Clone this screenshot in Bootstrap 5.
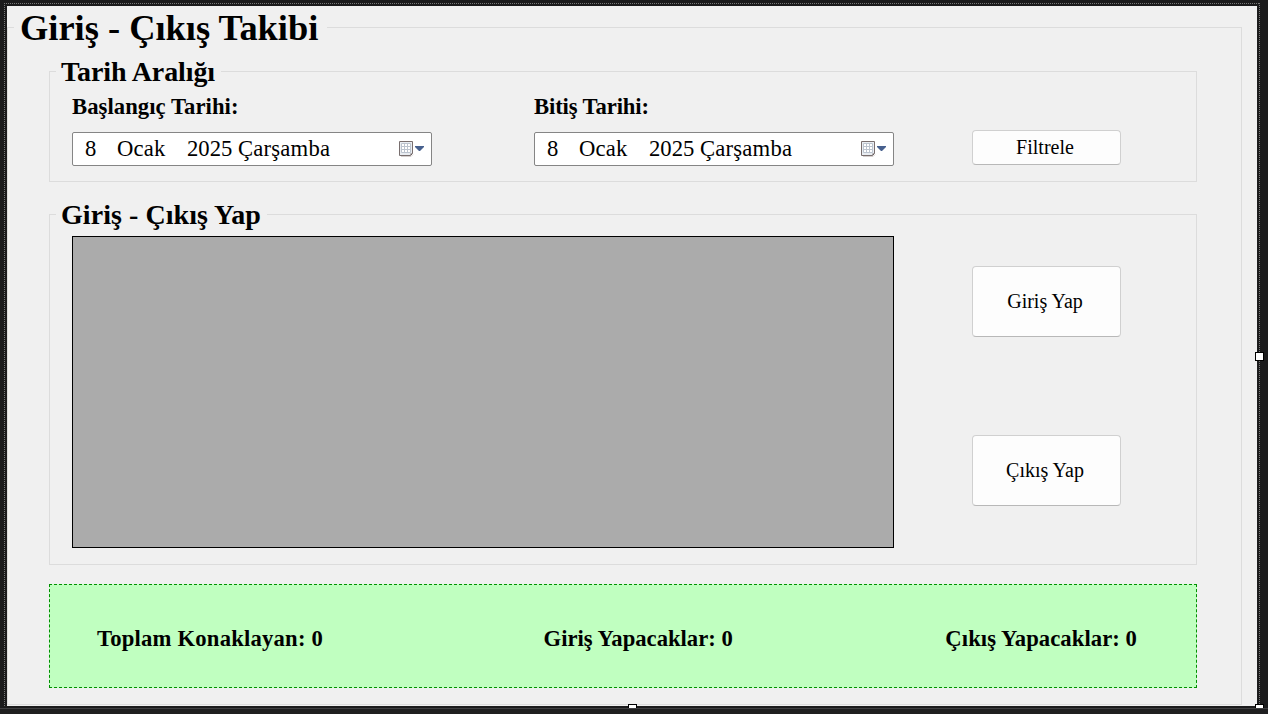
<!DOCTYPE html>
<html lang="tr">
<head>
<meta charset="utf-8">
<title>Giriş - Çıkış Takibi</title>
<link href="https://cdn.jsdelivr.net/npm/bootstrap@5.3.0/dist/css/bootstrap.min.css" rel="stylesheet">
<style>
body{background:#1b1b1c;font-family:"Liberation Serif",serif;color:#000;width:1268px;height:714px}
.designer{width:1268px;height:714px;padding:6px 0 0 7px}
.dots-h{left:4px;top:3px;width:1256px;height:1px;background:repeating-linear-gradient(90deg,#777 0 1px,transparent 1px 2px)}
.dots-v{top:3px;width:1px;height:704px;background:repeating-linear-gradient(#777 0 1px,transparent 1px 2px)}
.dots-l{left:4px}.dots-r{left:1259px}
.grip{width:9px;height:9px;background:#fff;border:1px solid #000}
.grip-r{left:1255px;top:352px}.grip-b{left:628px;top:704px}.grip-c{left:1255px;top:704px}
.status-edge{top:708px;height:6px;background:#1f1f20;border-top:1px solid #3f3f41}
.win-form{width:1250px;height:700px;background:#f0f0f0;padding-top:21px}
.group-frame{border:1px solid #dcdcdc;font-weight:bold}
.group-main{width:1235px;height:678px;padding:0 44px 0 41px}
.group-title{width:max-content;background:#f0f0f0;white-space:pre}
.title-main{margin:-22px 0 0 -35px;width:313px;padding:1px 0 0 6px;font-size:36.4px;line-height:43px}
.title-sub{margin:-16px 0 -1px 6px;padding:0 6px 0 5px;font-size:28px;line-height:32px}
.t1{letter-spacing:-.1px}
.t2{letter-spacing:.06px}
.t3{letter-spacing:-.12px}
.t4{letter-spacing:.06px}
.t5{letter-spacing:.2px}
.t7{letter-spacing:.06px}
.group-dates{height:111px;margin-top:21px}
.group-actions{height:351px;margin-top:32px}
.inner-grid{display:grid;padding-left:22px}
.dates-grid{grid-template-columns:360px 360px 149px;column-gap:102px}
.dates-grid .filter-cell{margin-left:-24px;padding-top:43px}
.field-label{display:block;font-size:22.67px;line-height:30px;margin-top:5px;white-space:pre}
.date-box{height:34px;margin-top:10px;background:#fff;border:1px solid #858585;border-radius:2px;padding:0 6px 0 12px;font-size:22.67px;font-weight:normal;line-height:30px;white-space:pre}
.date-box>span{letter-spacing:.2px}
.d-day{width:32px}.d-month{width:70px}.d-year{width:51px;letter-spacing:0!important}
.win-btn{width:149px;background:#fdfdfd;border:1px solid #d0d0d0;border-bottom-color:#b8b8b8;border-radius:4px;color:#000;font-size:20px;padding:0 3px 1px 0;line-height:29px}
.btn-short{height:35px}.btn-tall{height:71px}
.actions-grid{grid-template-columns:822px 149px;column-gap:78px;margin-top:6px}
.data-area{height:312px;background:#ababab;border:1px solid #000}
.stack-btns{padding-top:30px;gap:98px}
.totals{height:104px;margin-top:19px;background:#c0ffc0;border:1px dashed #009000;font-size:22.67px;font-weight:bold;white-space:pre;padding:6px 59px 0 47px}
.t6{margin-left:8px}
</style>
</head>
<body>
<div class="designer position-relative overflow-hidden">
  <main class="win-form">
    <section class="group-frame group-main">
      <div class="group-title title-main">Giriş - Çıkış Takibi</div>
      <section class="group-frame group-dates">
        <div class="group-title title-sub"><span class="t1">Tarih Aralığı</span></div>
        <div class="inner-grid dates-grid">
          <div>
            <span class="field-label"><span class="t2">Başlangıç Tarihi:</span></span>
            <div class="date-box d-flex align-items-center"><span class="d-day">8</span><span class="d-month">Ocak</span><span class="d-year">2025</span><span>Çarşamba</span>
              <svg class="ms-auto" width="26" height="16" viewBox="0 0 26 16"><use href="#cal"/></svg></div>
          </div>
          <div>
            <span class="field-label"><span class="t3">Bitiş Tarihi:</span></span>
            <div class="date-box d-flex align-items-center"><span class="d-day">8</span><span class="d-month">Ocak</span><span class="d-year">2025</span><span>Çarşamba</span>
              <svg class="ms-auto" width="26" height="16" viewBox="0 0 26 16"><use href="#cal"/></svg></div>
          </div>
          <div class="filter-cell"><button class="btn win-btn btn-short d-block">Filtrele</button></div>
        </div>
      </section>
      <section class="group-frame group-actions">
        <div class="group-title title-sub"><span class="t4">Giriş - Çıkış Yap</span></div>
        <div class="inner-grid actions-grid">
          <div class="data-area"></div>
          <div class="stack-btns d-flex flex-column">
            <button class="btn win-btn btn-tall">Giriş Yap</button>
            <button class="btn win-btn btn-tall">Çıkış Yap</button>
          </div>
        </div>
      </section>
      <section class="totals d-flex justify-content-between align-items-center"><span class="t5">Toplam Konaklayan: 0</span><span class="t6">Giriş Yapacaklar: 0</span><span class="t7">Çıkış Yapacaklar: 0</span></section>
    </section>
  </main>
  <div class="dots-h position-absolute"></div>
  <div class="dots-v dots-l position-absolute"></div>
  <div class="dots-v dots-r position-absolute"></div>
  <div class="grip grip-r position-absolute"></div>
  <div class="grip grip-b position-absolute"></div>
  <div class="grip grip-c position-absolute"></div>
  <div class="status-edge position-absolute start-0 w-100"></div>
</div>
<svg width="0" height="0" class="position-absolute">
  <symbol id="cal" viewBox="0 0 26 16">
    <path d="M2 15.5h10l2-2" fill="none" stroke="#d5d0cf"/>
    <path d="M.5.5h13v12l-2 2H.5z" fill="#e9edf2" stroke="#786e6e"/>
    <path d="M11.500 14.500v-2h2z" fill="#5c5050"/>
    <path d="M2.500 2.500h9v9h-9zM2.500 5.500h9M2.500 8.500h9M5.500 2.500v9M8.500 2.500v9" fill="#fff" stroke="#bcc4cf"/>
    <path d="M16 5h9v1l-4 4h-1l-4-4z" fill="#47608e"/>
  </symbol>
</svg>
<script src="https://cdn.jsdelivr.net/npm/bootstrap@5.3.0/dist/js/bootstrap.bundle.min.js"></script>
</body>
</html>
